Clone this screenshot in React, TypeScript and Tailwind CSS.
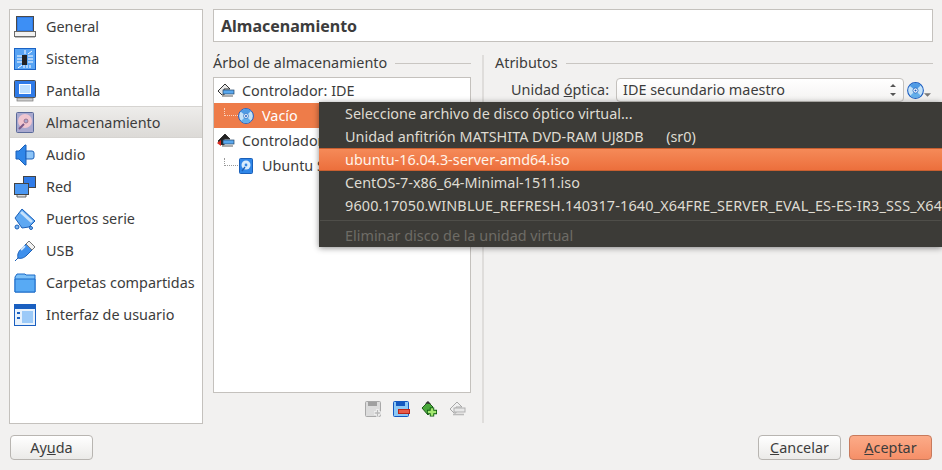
// VirtualBox settings dialog, storage page
const font = "font-['Noto_Sans','Open_Sans',sans-serif]"

function Laptop() {
  return (
    <svg width="22" height="22" viewBox="0 0 22 22">
      <rect x="2.5" y="0.5" width="17" height="15" fill="#2f7be8" stroke="#4a4a4a" />
      <rect x="4" y="2" width="14" height="12" fill="#3d8ff5" />
      <rect x="0.5" y="15.5" width="21" height="5" fill="#f2f2f2" stroke="#6a6a6a" />
      <path d="M1 21.5h20" stroke="#bbb" />
    </svg>
  )
}

function Chip() {
  return (
    <svg width="22" height="22" viewBox="0 0 22 22">
      <rect x="0.5" y="0.5" width="21" height="21" fill="#58a4f4" stroke="#1a62c4" />
      <path d="M3 8h5M3 11h5M3 14h5M14 8h5M14 11h5M14 14h5M11 2v4M14 6l4-3M8 17l-4 3M10 17v3M13 17v3M16 17v3" stroke="#fff" strokeWidth="1" />
      <rect x="8" y="7" width="5" height="10" fill="#222" />
    </svg>
  )
}

function Monitor() {
  return (
    <svg width="22" height="22" viewBox="0 0 22 22">
      <rect x="0.5" y="0.5" width="21" height="17" rx="1" fill="#2f7be8" stroke="#4a4a4a" />
      <rect x="5.5" y="4.5" width="11" height="9" fill="#bfe0ff" stroke="#fff" />
      <rect x="3" y="18" width="16" height="3" fill="#d0d0d0" stroke="#777" strokeWidth="0.7" />
    </svg>
  )
}

function Disk() {
  return (
    <svg width="22" height="22" viewBox="0 0 22 22">
      <rect x="2.5" y="0.5" width="17" height="20" rx="1" fill="#a9a9cf" stroke="#5a6a9a" />
      <circle cx="11" cy="9" r="7" fill="#f0c6d0" />
      <circle cx="12" cy="9" r="2" fill="#a9a9cf" stroke="#8a5a7a" strokeWidth="0.7" />
      <path d="M5 17l5-5" stroke="#7a5a8a" strokeWidth="2" />
    </svg>
  )
}

function Speaker() {
  return (
    <svg width="22" height="22" viewBox="0 0 22 22">
      <path d="M2 7h3l6-6h1v20h-1l-6-6H2z" fill="#2f86e8" stroke="#1a5fb8" />
      <path d="M12 7h6q2 0 2 2v4q0 2-2 2h-6z" fill="#8cc4f8" stroke="#1a5fb8" />
    </svg>
  )
}

function Net() {
  return (
    <svg width="22" height="22" viewBox="0 0 22 22">
      <rect x="9.5" y="0.5" width="12" height="11" fill="#2f7be8" stroke="#444" />
      <rect x="0.5" y="7.5" width="14" height="11" fill="#4a97f2" stroke="#444" />
      <path d="M3 19v2h9v-2" fill="#ddd" stroke="#666" />
    </svg>
  )
}

function Serial() {
  return (
    <svg width="22" height="22" viewBox="0 0 22 22">
      <path d="M1 10L8 1l13 12-6 6-7 1z" fill="#5ea8f2" stroke="#1a5fb8" />
      <path d="M7 4l11 10" stroke="#c8e2fb" strokeWidth="3" />
      <circle cx="3" cy="19" r="2" fill="#7ab8f4" stroke="#1a5fb8" />
      <circle cx="17" cy="20" r="1.5" fill="#7ab8f4" stroke="#1a5fb8" />
    </svg>
  )
}

function Usb() {
  return (
    <svg width="22" height="22" viewBox="0 0 22 22">
      <path d="M1 21l3-3c-1-4 1-7 3-9l5-5 6 6-5 5c-3 3-6 4-9 3l-3 3z" fill="#3f90ec" stroke="#1a5fb8" />
      <path d="M12 4l3-3 6 6-3 3z" fill="#f2f2f2" stroke="#777" />
      <path d="M7 10l4-4" stroke="#cfe6fc" strokeWidth="2" />
    </svg>
  )
}

function Folder() {
  return (
    <svg width="22" height="22" viewBox="0 0 22 22">
      <path d="M1 5l2-3h8l1 1h9v17H1z" fill="#7cc0f8" stroke="#1a6ac8" />
      <path d="M1 7h20v13H1z" fill="#58aaf4" stroke="#1a6ac8" />
    </svg>
  )
}

function Ui() {
  return (
    <svg width="22" height="22" viewBox="0 0 22 22">
      <rect x="0.5" y="0.5" width="21" height="21" fill="#e8f2fc" stroke="#1a5fc0" />
      <rect x="1" y="1" width="20" height="4" fill="#1a5fc0" />
      <rect x="8" y="7" width="11" height="12" fill="#9ccaf8" />
      <path d="M3 8h3v2H3zM3 13h3v2H3z" fill="#1a5fc0" />
    </svg>
  )
}

function Cd({ size = 16 }: { size?: number }) {
  return (
    <svg width={size} height={size} viewBox="0 0 16 16" className="shrink-0">
      <circle cx="8" cy="8" r="7.4" fill="#c4e2f8" stroke="#1a5cc0" />
      <path d="M8 8L2.5 3.5A7 7 0 0 1 13 3z" fill="#4f9be4" />
      <path d="M8 8L13 13A7 7 0 0 1 3 13z" fill="#63aeea" />
      <circle cx="8" cy="8" r="2.4" fill="#fff" stroke="#2a6cc0" strokeWidth="0.8" />
      <circle cx="8" cy="8" r="1" fill="#1a5cc0" />
    </svg>
  )
}

function Hdd() {
  return (
    <svg width="16" height="16" viewBox="0 0 16 16" className="shrink-0">
      <rect x="1.5" y="0.5" width="13" height="15" rx="1" fill="#2f86e8" stroke="#1a5fb8" />
      <circle cx="8" cy="7" r="4.5" fill="#d8ecfc" />
      <circle cx="8" cy="7" r="1.4" fill="#2f86e8" />
      <path d="M4 13l3-4" stroke="#1a5fb8" strokeWidth="1.4" />
    </svg>
  )
}

function Controller({ color = "#e8e8e8", red = false }: { color?: string; red?: boolean }) {
  return (
    <svg width="18" height="16" viewBox="0 0 18 16" className="shrink-0">
      <path d="M1 8l7-7 5 5H7v6H5z" fill={red ? "#222" : color} stroke="#333" />
      <rect x="6" y="7" width="11" height="4" fill="#5aa8ee" stroke="#246" strokeWidth="0.7" />
      <path d="M5 13h11" stroke="#999" strokeWidth="1.6" />
      {red && <path d="M0 10l4-3v6z" fill="#d8281c" />}
    </svg>
  )
}

function AddHdd() {
  return (
    <svg width="17" height="17" viewBox="0 0 17 17">
      <rect x="0.5" y="0.5" width="15" height="15" rx="1" fill="#dcdcdc" stroke="#a8a8a8" />
      <rect x="3" y="1" width="9" height="4" fill="#a0a0a0" />
      <path d="M9 12h7M12.5 8.5v7" stroke="#fff" strokeWidth="3" />
      <path d="M9.5 12h6M12.5 9v6" stroke="#b8b8b8" strokeWidth="1.6" />
    </svg>
  )
}

function RemoveHdd() {
  return (
    <svg width="17" height="17" viewBox="0 0 17 17">
      <rect x="0.5" y="0.5" width="15" height="15" rx="1" fill="#8cc8f6" stroke="#1458c0" />
      <rect x="3" y="1" width="9" height="4" fill="#1458c0" />
      <rect x="5.5" y="8.5" width="11" height="4" fill="#e85a48" stroke="#b82418" />
    </svg>
  )
}

function AddController() {
  return (
    <svg width="17" height="17" viewBox="0 0 17 17">
      <path d="M1 7l6-6 5 5-5 8z" fill="#4aa83c" stroke="#1c5c18" />
      <path d="M4 2.5L7 0l3 3z" fill="#333" />
      <path d="M6 11h10M11 6.5v9" stroke="#0c5c10" strokeWidth="4.4" />
      <path d="M6.8 11h8.4M11 7.3v7.4" stroke="#a4e870" strokeWidth="2.6" />
    </svg>
  )
}

function RemoveController() {
  return (
    <svg width="17" height="17" viewBox="0 0 17 17">
      <path d="M1 8l7-7 5 5H7v6H5z" fill="#f0f0f0" stroke="#a8a8a8" />
      <rect x="5" y="7" width="11" height="4" fill="#e8e8e8" stroke="#b0b0b0" />
      <path d="M4 13.5h11" stroke="#bbb" strokeWidth="1.6" />
    </svg>
  )
}

const sections = [
  { name: "General", icon: <Laptop /> },
  { name: "Sistema", icon: <Chip /> },
  { name: "Pantalla", icon: <Monitor /> },
  { name: "Almacenamiento", icon: <Disk />, active: true },
  { name: "Audio", icon: <Speaker /> },
  { name: "Red", icon: <Net /> },
  { name: "Puertos serie", icon: <Serial /> },
  { name: "USB", icon: <Usb /> },
  { name: "Carpetas compartidas", icon: <Folder /> },
  { name: "Interfaz de usuario", icon: <Ui /> },
]

function Sidebar() {
  return (
    <div className="w-[194px] h-[415px] shrink-0 bg-white border border-[#c4c1bd]">
      {sections.map((s) => (
        <div
          key={s.name}
          className={`h-[32px] pt-[2px] flex items-center gap-[10px] pl-[4px] ${s.active ? "bg-gradient-to-b from-[#eeedeb] to-[#dcdad7] border-y border-[#d6d4d1]" : ""}`}
        >
          {s.icon}
          <span className="text-[#3c3c3c]">{s.name}</span>
        </div>
      ))}
    </div>
  )
}

function GroupTitle({ title }: { title: string }) {
  return (
    <div className="h-[16px] flex items-center gap-[8px]">
      <span>{title}</span>
      <div className="flex-1 h-px bg-[#c9c6c2]"></div>
    </div>
  )
}

function Tree() {
  return (
    <div className="w-[258px]">
      <GroupTitle title="Árbol de almacenamiento" />
      <div className="mt-[6px] h-[316px] bg-white border border-[#c4c1bd]">
        <div className="h-[25px] flex items-center gap-[7px] pl-[3px]">
          <Controller />
          <span>Controlador: IDE</span>
        </div>
        <div className="h-[25px] flex items-center bg-[#ee7c49] text-white pl-[10px]">
          <div className="w-[14px] h-[8px] border-l border-b border-dotted border-[#f8d4c0] mb-[8px]"></div>
          <Cd />
          <span className="ml-[8px]">Vacío</span>
        </div>
        <div className="h-[25px] flex items-center gap-[7px] pl-[3px]">
          <Controller red />
          <span>Controlador: SATA</span>
        </div>
        <div className="h-[25px] flex items-center pl-[10px]">
          <div className="w-[14px] h-[8px] border-l border-b border-dotted border-[#999] mb-[8px]"></div>
          <Hdd />
          <span className="ml-[8px]">Ubuntu Server.vdi</span>
        </div>
      </div>
      <div className="mt-[8px] flex justify-end gap-[11px] pr-[5px]">
        <AddHdd />
        <RemoveHdd />
        <AddController />
        <RemoveController />
      </div>
    </div>
  )
}

function Attributes() {
  return (
    <div className="flex-1 pl-[11px]">
      <GroupTitle title="Atributos" />
      <div className="mt-[7px] flex items-center">
        <span className="w-[121px] shrink-0 text-right pr-[7px] whitespace-nowrap">
          Unidad <span className="underline">ó</span>ptica:
        </span>
        <div className="w-[288px] h-[24px] shrink-0 rounded-[4px] border border-[#c4c1bd] bg-gradient-to-b from-white to-[#f4f3f2] flex items-center justify-between pl-[6px] pr-[6px]">
          <span>IDE secundario maestro</span>
          <svg width="8" height="16" viewBox="0 0 8 16">
            <path d="M4 2L7 5H1zM4 14L1 11h6z" fill="#555" />
          </svg>
        </div>
        <div className="ml-[3px] flex items-end">
          <Cd size={17} />
          <svg width="7" height="6" viewBox="0 0 8 6" className="mb-[1px]">
            <path d="M0 1h8L4 5z" fill="#777" />
          </svg>
        </div>
      </div>
    </div>
  )
}

const menuItems = [
  "Seleccione archivo de disco óptico virtual...",
  "Unidad anfitrión MATSHITA DVD-RAM UJ8DB\u00a0\u00a0\u00a0\u00a0\u00a0\u00a0(sr0)",
  "ubuntu-16.04.3-server-amd64.iso",
  "CentOS-7-x86_64-Minimal-1511.iso",
  "9600.17050.WINBLUE_REFRESH.140317-1640_X64FRE_SERVER_EVAL_ES-ES-IR3_SSS_X64FREE_ES-ES_DV9.ISO",
]

function Menu() {
  return (
    <div className="absolute left-[319px] top-[102px] w-[623px] h-[145px] overflow-hidden bg-[#3c3b37] text-[#dfdbd2] shadow-[0_1px_6px_rgba(0,0,0,0.45)]">
      {menuItems.map((item, i) => (
        <div
          key={item}
          className={`h-[23px] flex items-center pl-[26px] whitespace-nowrap ${i === 2 ? "bg-gradient-to-b from-[#f58a58] to-[#ec6f3c] text-[#fff3e8] border-y border-[#c85f30]" : ""} ${i === 4 ? "tracking-[0.16px]" : ""}`}
        >
          {item}
        </div>
      ))}
      <div className="mt-[3px] mb-[3px] mx-px h-px bg-[#4f4e49]"></div>
      <div className="h-[23px] flex items-center pl-[26px] text-[#6e6c66]">Eliminar disco de la unidad virtual</div>
    </div>
  )
}

function Button({ children, primary = false }: { children: React.ReactNode; primary?: boolean }) {
  return (
    <button
      className={`w-[83px] h-[25px] rounded-[4px] border text-[#3c3c3c] ${primary ? "border-[#c87a5c] bg-gradient-to-b from-[#fcab88] to-[#f58f68]" : "border-[#b8b5b1] bg-gradient-to-b from-white to-[#ebeae8]"}`}
    >
      {children}
    </button>
  )
}

export default function App() {
  return (
    <div className={`${font} relative w-[942px] h-[470px] overflow-hidden bg-[#f2f1f0] text-[14.4px] leading-[16px] text-[#3c3c3c] px-[9px] pt-[9px]`}>
      <div className="flex gap-[10px]">
        <Sidebar />
        <div className="w-[720px]">
          <div className="h-[33px] bg-white border border-[#c4c1bd] flex items-center pl-[7px] text-[16px] font-bold">
            Almacenamiento
          </div>
          <div className="mt-[13px] flex h-[369px]">
            <Tree />
            <div className="ml-[11px] w-[2px] h-[368px] shrink-0 bg-[#dfdddb]"></div>
            <Attributes />
          </div>
        </div>
      </div>
      <div className="mt-[11px] flex items-center pl-px">
        <Button>
          Ay<span className="underline">u</span>da
        </Button>
        <div className="flex-1"></div>
        <div className="flex gap-[8px] pr-px">
          <Button>
            <span className="underline">C</span>ancelar
          </Button>
          <Button primary>
            <span className="underline">A</span>ceptar
          </Button>
        </div>
      </div>
      <Menu />
    </div>
  )
}
